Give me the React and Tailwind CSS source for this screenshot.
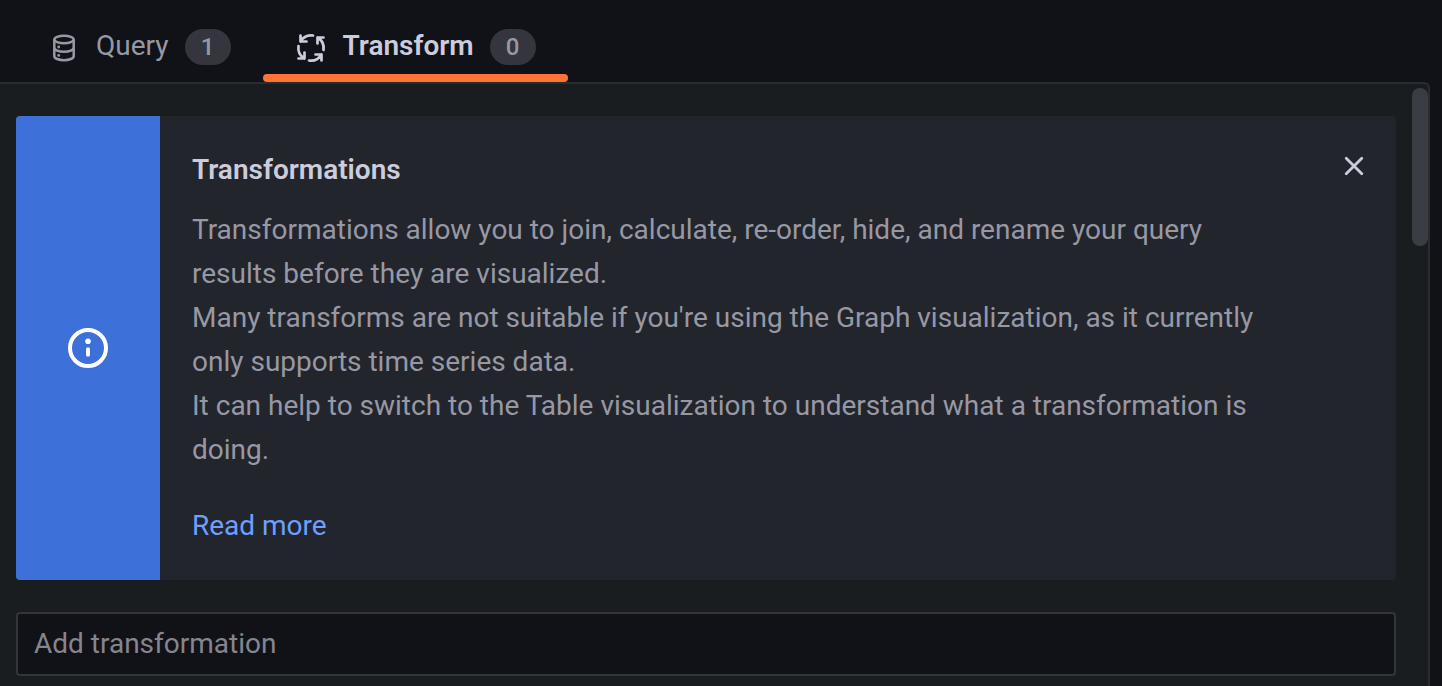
import React from 'react';

const description = [
  'Transformations allow you to join, calculate, re-order, hide, and rename your query results before they are visualized.',
  "Many transforms are not suitable if you're using the Graph visualization, as it currently only supports time series data.",
  'It can help to switch to the Table visualization to understand what a transformation is doing.',
];

function DatabaseIcon() {
  return (
    <svg
      className="mt-0.5 size-8"
      viewBox="0 0 32 32"
      fill="none"
      stroke="currentColor"
      strokeWidth="2.5"
      aria-hidden="true"
    >
      <ellipse cx="16" cy="7.5" rx="9.7" ry="3.8" />
      <path d="M6.3 7.5v16.700c0 2.200 4.300 4 9.700 4s9.700-1.800 9.700-4V7.500" />
      <path d="M6.300 15.800c0 2.200 4.300 4 9.700 4s9.700-1.800 9.700-4" />
      <circle cx="10.700" cy="15" r="1.400" fill="currentColor" stroke="none" />
      <circle cx="10.700" cy="23.400" r="1.400" fill="currentColor" stroke="none" />
    </svg>
  );
}

function ProcessIcon() {
  const arrow = 'M-10.500 -12.500V-6.500H-4.500M-10.500 -6.500A12.500 12.500 0 0 1 2 -12.500';

  return (
    <svg
      className="mt-0.5 size-8"
      viewBox="-16 -16 32 32"
      fill="none"
      stroke="currentColor"
      strokeWidth="2.700"
      strokeLinecap="round"
      strokeLinejoin="round"
      aria-hidden="true"
    >
      {[0, 90, 180, 270].map((angle) => (
        <path key={angle} d={arrow} transform={`rotate(${angle})`} />
      ))}
    </svg>
  );
}

function InfoIcon() {
  return (
    <svg className="size-12" viewBox="0 0 48 48" fill="none" aria-hidden="true">
      <circle cx="24" cy="24" r="18" stroke="currentColor" strokeWidth="4" />
      <circle cx="24" cy="17.300" r="2.800" fill="currentColor" />
      <path d="M24 25.200v5.600" stroke="currentColor" strokeWidth="4" strokeLinecap="round" />
    </svg>
  );
}

function CloseIcon() {
  return (
    <svg
      className="size-8"
      viewBox="0 0 32 32"
      stroke="currentColor"
      strokeWidth="2.800"
      strokeLinecap="round"
      aria-hidden="true"
    >
      <path d="M8.200 8.200l15.600 15.600M23.800 8.200L8.200 23.800" />
    </svg>
  );
}

function Tab({ icon, label, count, active }) {
  return (
    <button
      type="button"
      role="tab"
      aria-selected={active}
      className={`relative flex items-center px-8 pt-3 ${
        active ? 'font-semibold text-[#ccccdc]' : 'text-[#9898a5]'
      }`}
    >
      {icon}
      <span className="ml-4 pb-0.5">{label}</span>
      <span className="ml-4 flex h-9 w-[46px] items-center justify-center rounded-full bg-[#34353d] text-2xl font-medium text-[#9898a5]">
        {count}
      </span>
      {active && <span className="absolute inset-x-0 bottom-0 h-2 rounded-sm bg-[#ff7337]" />}
    </button>
  );
}

export default function App() {
  return (
    <div className="flex min-h-screen flex-col bg-[#111217] pr-3 font-['Roboto',sans-serif] text-[28px] leading-[44px] text-[#9898a5]">
      <div role="tablist" className="flex h-[82px] pl-4">
        <Tab icon={<DatabaseIcon />} label="Query" count={1} active={false} />
        <Tab icon={<ProcessIcon />} label="Transform" count={0} active />
      </div>

      <main className="relative grow rounded-tr-md border-t-2 border-r-2 border-[#2a2c31] bg-[#191d1f] pt-8 pr-8 pb-2 pl-4">
        <section className="flex overflow-hidden rounded-sm bg-[#22252c]">
          <div className="flex w-36 shrink-0 items-center justify-center bg-[#3d71d9] text-white">
            <InfoIcon />
          </div>
          <div className="grow py-8 pr-12 pl-8">
            <h2 className="mb-4 font-semibold text-[#ccccdc]">Transformations</h2>
            {description.map((text) => (
              <p key={text}>{text}</p>
            ))}
            <a href="#read-more" className="mt-8 inline-block text-[#6e9fff]">
              Read more
            </a>
          </div>
          <button
            type="button"
            aria-label="Close"
            className="mt-[34px] mr-[26px] ml-2 self-start text-[#ccccdc]"
          >
            <CloseIcon />
          </button>
        </section>

        <input
          type="text"
          aria-label="Add transformation"
          placeholder="Add transformation"
          className="mt-8 h-16 w-full rounded-sm border-2 border-[#34353b] bg-[#111217] px-4 pb-0.5 placeholder:text-[#85858f] focus:outline-none"
        />

        <div className="absolute top-1 right-0 h-[158px] w-4 rounded-full bg-[#3b3d45]" />
      </main>
    </div>
  );
}
